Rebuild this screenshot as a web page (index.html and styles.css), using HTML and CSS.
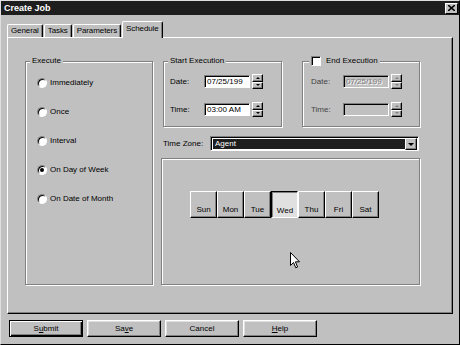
FILE: index.html
```html
<!doctype html>
<html lang="en">
  <head>
    <meta charset="utf-8" />
    <title>Create Job</title>
    <link rel="stylesheet" href="styles.css">
  </head>
  <body>
    <div class="window">
      <div class="titlebar">
        <span>Create Job</span>
        <span class="close" aria-label="Close">
          <svg width="7" height="6" viewBox="0 0 7 6"><path d="M0 0 L7 6 M7 0 L0 6" stroke="#000" stroke-width="1.6"/></svg>
        </span>
      </div>

      <div class="main">
        <div class="tabs">
          <span class="tab">General</span>
          <span class="tab">Tasks</span>
          <span class="tab">Parameters</span>
          <span class="tab tab-active">Schedule</span>
        </div>

        <div class="panel">
          <div class="group execute">
            <div class="group-title">Execute</div>
            <div class="radios">
              <label class="radio-row"><span class="radio"></span>Immediately</label>
              <label class="radio-row"><span class="radio"></span>Once</label>
              <label class="radio-row"><span class="radio"></span>Interval</label>
              <label class="radio-row"><span class="radio radio-on"></span>On Day of Week</label>
              <label class="radio-row"><span class="radio"></span>On Date of Month</label>
            </div>
          </div>

          <div class="right">
            <div class="ranges">
              <div class="group range start">
                <div class="group-title">Start Execution</div>
                <div class="field">
                  <span class="field-label">Date:</span>
                  <span class="input">07/25/199</span>
                  <span class="spin"><span class="spin-up"></span><span class="spin-down"></span></span>
                </div>
                <div class="field">
                  <span class="field-label">Time:</span>
                  <span class="input">03:00 AM</span>
                  <span class="spin"><span class="spin-up"></span><span class="spin-down"></span></span>
                </div>
              </div>

              <div class="group range end">
                <div class="group-title"><span class="check"></span>End Execution</div>
                <div class="field disabled">
                  <span class="field-label">Date:</span>
                  <span class="input">07/25/199</span>
                  <span class="spin"><span class="spin-up"></span><span class="spin-down"></span></span>
                </div>
                <div class="field disabled">
                  <span class="field-label">Time:</span>
                  <span class="input"></span>
                  <span class="spin"><span class="spin-up"></span><span class="spin-down"></span></span>
                </div>
              </div>
            </div>

            <div class="zone">
              <span class="zone-label">Time Zone:</span>
              <span class="combo">
                <span class="combo-value">Agent</span>
                <span class="combo-btn"><span class="arrow-down"></span></span>
              </span>
            </div>

            <div class="group days">
              <div class="day-row">
                <span class="day">Sun</span>
                <span class="day">Mon</span>
                <span class="day">Tue</span>
                <span class="day day-on">Wed</span>
                <span class="day">Thu</span>
                <span class="day">Fri</span>
                <span class="day">Sat</span>
              </div>
              <svg class="cursor" width="11" height="17" viewBox="0 0 11 17">
                <path d="M0.5 0.5 V13.5 L3.5 10.5 L5.8 15.8 L7.6 15 L5.4 9.8 H9.5 Z" fill="#fff" stroke="#000" stroke-width="1"/>
              </svg>
            </div>
          </div>
        </div>

        <div class="buttons">
          <span class="button button-default">S<u>u</u>bmit</span>
          <span class="button">Sa<u>v</u>e</span>
          <span class="button">Cancel</span>
          <span class="button"><u>H</u>elp</span>
        </div>
      </div>
    </div>
  </body>
</html>
```

FILE: styles.css
```css
html {
  background: #c0c0c0;
}

body {
  margin: 0;
  font: 8px/10px "Liberation Sans", Arial, sans-serif;
  color: #000;
}

.window {
  width: 460px;
  height: 345px;
  box-sizing: border-box;
  background: #c0c0c0;
  border: 1px solid;
  border-color: #dfdfdf #000 #000 #dfdfdf;
}

.titlebar {
  height: 14px;
  background: #1e1e1e;
  color: #fff;
  font-weight: bold;
  font-size: 9px;
  display: flex;
  align-items: center;
  justify-content: space-between;
  padding: 0 1px 0 3px;
}

.close {
  width: 13px;
  height: 11px;
  box-sizing: border-box;
  background: #c0c0c0;
  border: 1px solid;
  border-color: #fff #000 #000 #fff;
  display: flex;
  align-items: center;
  justify-content: center;
}

.main {
  padding: 0 6px;
}

/* tabs */

.tabs {
  height: 22px;
  display: flex;
  align-items: flex-end;
  gap: 1px;
}

.tab {
  height: 13px;
  box-sizing: border-box;
  padding: 1px 3px 0;
  border: 1px solid;
  border-bottom: 0;
  border-color: #fff #000 #000 #fff;
  border-radius: 2px 2px 0 0;
  box-shadow: inset -1px 0 0 #808080;
  letter-spacing: -0.1px;
}

.tab-active {
  height: 17px;
  margin-bottom: -1px;
  padding-top: 2px;
  background: #c0c0c0;
  position: relative;
  z-index: 1;
}

.panel {
  height: 277px;
  box-sizing: border-box;
  border: 1px solid;
  border-color: #fff #000 #000 #fff;
  box-shadow: inset -1px -1px 0 #808080;
  padding: 23px 32px 28px 17px;
  display: grid;
  grid-template-columns: 128px 1fr;
  column-gap: 8px;
}

/* group boxes */

.group {
  border: 1px solid #808080;
  box-shadow: inset 1px 1px 0 #fff, 1px 1px 0 #fff;
}

.group-title {
  height: 10px;
  margin: -6px 0 0 4px;
  padding: 0 2px;
  width: fit-content;
  background: #c0c0c0;
  display: flex;
  align-items: center;
}

.radios {
  margin-top: 12px;
  padding-left: 11px;
  display: flex;
  flex-direction: column;
  gap: 19px;
}

.radio-row {
  display: flex;
  align-items: center;
  gap: 3px;
  height: 10px;
}

.radio {
  width: 10px;
  height: 10px;
  box-sizing: border-box;
  border-radius: 50%;
  background: #fff;
  border: 1px solid;
  border-color: #808080 #fff #fff #808080;
  box-shadow: inset 1px 1px 0 #000;
  display: flex;
  align-items: center;
  justify-content: center;
}

.radio-on::after {
  content: "";
  width: 4px;
  height: 4px;
  border-radius: 50%;
  background: #000;
}

.right {
  display: flex;
  flex-direction: column;
}

.ranges {
  display: flex;
  gap: 20px;
  padding-left: 2px;
}

.range {
  height: 66px;
  box-sizing: border-box;
}

.start {
  width: 119px;
}

.end {
  width: 118px;
}

.end .group-title {
  margin-left: 6px;
  gap: 5px;
}

.check {
  width: 10px;
  height: 10px;
  box-sizing: border-box;
  background: #fff;
  border: 1px solid;
  border-color: #808080 #fff #fff #808080;
  box-shadow: inset 1px 1px 0 #000;
}

.field {
  display: flex;
  align-items: center;
  height: 15px;
  padding-left: 6px;
  margin-top: 8px;
}

.field + .field {
  margin-top: 13px;
}

.end .field {
  padding-left: 8px;
}

.field-label {
  width: 34px;
}

.end .field-label {
  width: 32px;
}

.input {
  width: 46px;
  height: 13px;
  box-sizing: border-box;
  background: #fff;
  border: 1px solid;
  border-color: #808080 #fff #fff #808080;
  box-shadow: inset 1px 1px 0 #000;
  padding: 1px 0 0 2px;
  line-height: 10px;
}

.spin {
  width: 11px;
  height: 15px;
  margin-left: 2px;
  display: flex;
  flex-direction: column;
}

.spin-up,
.spin-down {
  flex: 1;
  box-sizing: border-box;
  border: 1px solid;
  border-color: #fff #000 #000 #fff;
  box-shadow: inset -1px -1px 0 #808080;
  display: flex;
  align-items: center;
  justify-content: center;
}

.spin-up::after,
.spin-down::after {
  content: "";
  border-left: 2px solid transparent;
  border-right: 2px solid transparent;
}

.spin-up::after {
  border-bottom: 2px solid #000;
}

.spin-down::after {
  border-top: 2px solid #000;
}

.disabled .field-label {
  color: #444;
}

.disabled .input {
  background: #c0c0c0;
  color: #808080;
  text-shadow: 1px 1px 0 #fff;
}

.disabled .spin-up::after {
  border-bottom-color: #808080;
}

.disabled .spin-down::after {
  border-top-color: #808080;
}

/* time zone */

.zone {
  display: flex;
  align-items: center;
  margin-top: 9px;
  padding-left: 2px;
}

.zone-label {
  width: 47px;
}

.combo {
  width: 209px;
  height: 15px;
  box-sizing: border-box;
  border: 1px solid;
  border-color: #808080 #fff #fff #808080;
  box-shadow: inset 1px 1px 0 #000;
  background: #fff;
  padding: 1px 1px 0 1px;
  display: flex;
}

.combo-value {
  flex: 1;
  background: #1e1e1e;
  color: #fff;
  padding-left: 2px;
  margin: 1px 0 1px 1px;
  line-height: 10px;
}

.combo-btn {
  width: 12px;
  box-sizing: border-box;
  background: #c0c0c0;
  border: 1px solid;
  border-color: #fff #000 #000 #fff;
  box-shadow: inset -1px -1px 0 #808080;
  display: flex;
  align-items: center;
  justify-content: center;
}

.arrow-down {
  border-left: 3px solid transparent;
  border-right: 3px solid transparent;
  border-top: 3px solid #000;
}

/* days */

.days {
  flex: 1;
  margin-top: 7px;
  padding: 32px 0 0 28px;
  position: relative;
}

.day-row {
  display: flex;
}

.day {
  width: 27px;
  height: 27px;
  box-sizing: border-box;
  border: 1px solid;
  border-color: #fff #000 #000 #fff;
  box-shadow: inset -1px -1px 0 #808080;
  display: flex;
  align-items: flex-end;
  justify-content: center;
  padding-bottom: 2px;
}

.day-on {
  border-color: #000 #fff #fff #000;
  box-shadow: inset 1px 1px 0 #808080;
  background: #e0e0e0;
  padding: 1px 0 1px 1px;
}

.cursor {
  position: absolute;
  left: 128px;
  top: 93px;
}

/* buttons */

.buttons {
  display: flex;
  gap: 4px;
  margin-top: 6px;
  padding-left: 2px;
}

.button {
  width: 74px;
  height: 17px;
  box-sizing: border-box;
  border: 1px solid;
  border-color: #fff #000 #000 #fff;
  box-shadow: inset -1px -1px 0 #808080, inset 1px 1px 0 #dfdfdf;
  display: flex;
  align-items: center;
  justify-content: center;
}

.button-default {
  border: 1px solid #000;
  box-shadow: inset 1px 1px 0 #fff, inset -1px -1px 0 #000, inset -2px -2px 0 #808080;
}
```
